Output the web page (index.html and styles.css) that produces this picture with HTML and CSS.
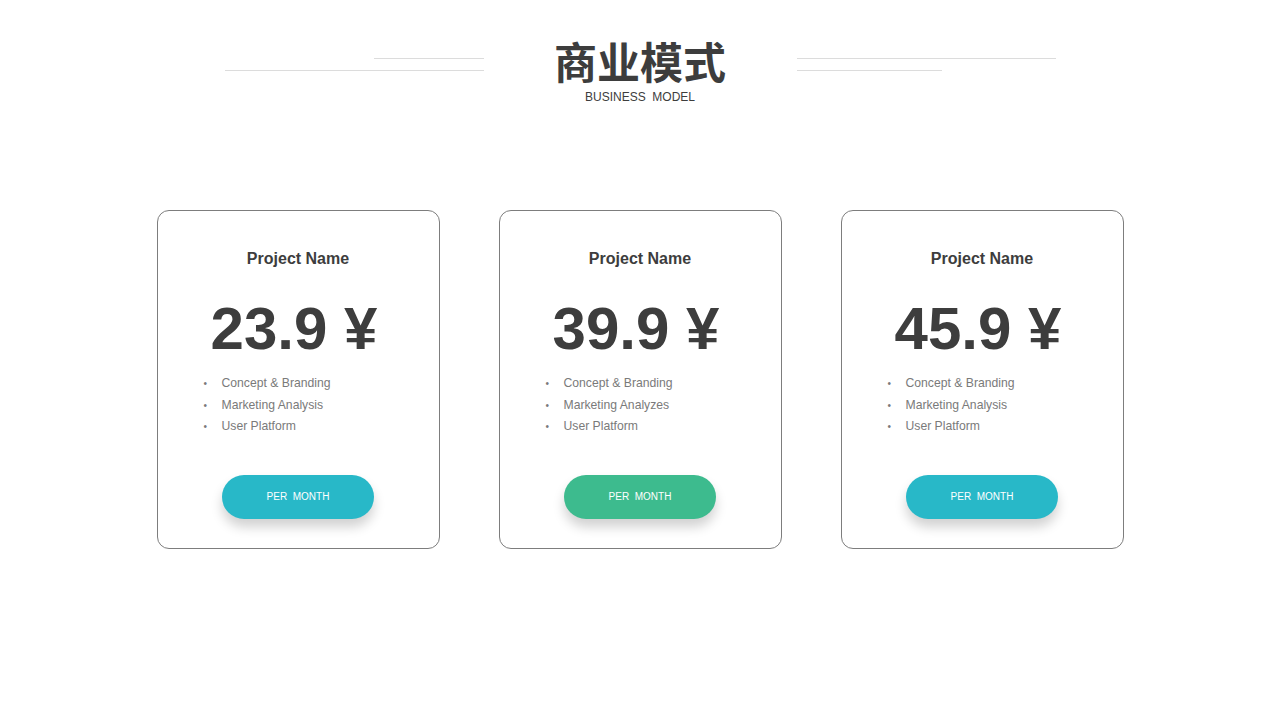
FILE: index.html
```html
<!DOCTYPE html>
<html lang="zh-CN">
<head>
  <meta charset="UTF-8">
  <title>商业模式</title>
  <link rel="stylesheet" href="styles.css">
</head>
<body>

  <!-- Header -->
  <header class="header">
    <div class="deco deco-left">
      <span class="line short"></span>
      <span class="line"></span>
    </div>
    <div class="title-block">
      <h1 class="title">商业模式</h1>
      <div class="subtitle">BUSINESS&nbsp; MODEL</div>
    </div>
    <div class="deco deco-right">
      <span class="line"></span>
      <span class="line short"></span>
    </div>
  </header>

  <!-- Pricing cards -->
  <main class="cards">
    <div class="card">
      <div class="card-name">Project Name</div>
      <div class="price">23.9 ¥</div>
      <ul class="features">
        <li>Concept &amp; Branding</li>
        <li>Marketing Analysis</li>
        <li>User Platform</li>
      </ul>
      <button class="pill cyan">PER&nbsp; MONTH</button>
    </div>

    <div class="card">
      <div class="card-name">Project Name</div>
      <div class="price">39.9 ¥</div>
      <ul class="features">
        <li>Concept &amp; Branding</li>
        <li>Marketing Analyzes</li>
        <li>User Platform</li>
      </ul>
      <button class="pill green">PER&nbsp; MONTH</button>
    </div>

    <div class="card">
      <div class="card-name">Project Name</div>
      <div class="price">45.9 ¥</div>
      <ul class="features">
        <li>Concept &amp; Branding</li>
        <li>Marketing Analysis</li>
        <li>User Platform</li>
      </ul>
      <button class="pill cyan">PER&nbsp; MONTH</button>
    </div>
  </main>

</body>
</html>
```

FILE: styles.css
```css
:root {
  --text: #3d3d3d;
  --muted: #7a7a7a;
  --line: #dcdcdc;
  --border: #7d7d7d;
  --cyan: #28b8c8;
  --green: #3dbb8e;
}

body {
  margin: 0;
  width: 1280px;
  height: 720px;
  background: #fff;
  font-family: 'Liberation Sans', Arial, 'Noto Sans CJK SC', sans-serif;
  color: var(--text);
}

/* Header */
.header {
  display: flex;
  justify-content: center;
  align-items: flex-start;
  padding-top: 34px;
}

.deco {
  width: 259px;
  margin-top: 24px;
  display: flex;
  flex-direction: column;
  gap: 11px;
}

.deco-left {
  align-items: flex-end;
}

.deco-right {
  align-items: flex-start;
}

.line {
  display: block;
  width: 100%;
  height: 1px;
  background: var(--line);
}

.deco-left .line.short {
  width: 110px;
}

.deco-right .line.short {
  width: 145px;
}

.title-block {
  width: 313px;
  text-align: center;
}

.title {
  margin: 0;
  font-family: 'Noto Sans CJK SC', sans-serif;
  font-size: 43px;
  line-height: 52px;
  font-weight: 700;
  color: var(--text);
}

.subtitle {
  margin-top: 3px;
  font-size: 12px;
  line-height: 16px;
  color: var(--text);
}

/* Cards */
.cards {
  display: flex;
  justify-content: center;
  gap: 59px;
  margin-top: 105px;
}

.card {
  width: 281px;
  height: 299px;
  border: 1px solid var(--border);
  border-radius: 12px;
  padding-top: 38px;
  display: flex;
  flex-direction: column;
  align-items: center;
}

.card-name {
  font-size: 16px;
  line-height: 20px;
  font-weight: 700;
  color: var(--text);
}

.price {
  margin-top: 25px;
  font-size: 60px;
  line-height: 70px;
  font-weight: 700;
  color: var(--text);
  transform: translateX(-4px);
}

.features {
  align-self: stretch;
  list-style: none;
  margin: 9px 0 0;
  padding: 0 0 0 64px;
}

.features li {
  position: relative;
  font-size: 12.2px;
  line-height: 21.5px;
  color: var(--muted);
}

.features li::before {
  content: "•";
  position: absolute;
  left: -18px;
  font-size: 10px;
  color: var(--muted);
}

.pill {
  margin-top: 37px;
  width: 152px;
  height: 44px;
  border: none;
  border-radius: 22px;
  color: #fff;
  font-family: 'Liberation Sans', Arial, sans-serif;
  font-size: 10px;
  box-shadow: 0 8px 12px rgba(0, 0, 0, 0.18);
}

.pill.cyan {
  background: var(--cyan);
}

.pill.green {
  background: var(--green);
}
```
